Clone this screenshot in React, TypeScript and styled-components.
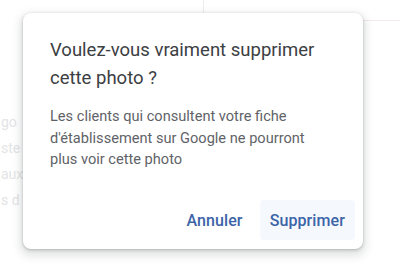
import React from 'react';
import styled, { createGlobalStyle } from 'styled-components';

const GlobalStyle = createGlobalStyle`
  html, body {
    margin: 0;
    padding: 0;
    background: #ffffff;
  }
  body {
    font-family: Roboto, "Liberation Sans", Arial, sans-serif;
    -webkit-font-smoothing: antialiased;
  }
`;

const Page = styled.div`
  position: relative;
  width: 400px;
  height: 276px;
  overflow: hidden;
  background: #ffffff;
`;

const Backdrop = styled.div`
  position: absolute;
  inset: 0;
  display: flex;
  flex-direction: column;
  gap: 9px;
  padding: 114px 0 0 1px;
  color: #e4e4e6;
  font-size: 14px;
  line-height: 17px;
`;

const GhostLine = styled.span`
  white-space: nowrap;
`;

const TopRule = styled.div`
  position: absolute;
  left: 203px;
  top: 0;
  width: 1px;
  height: 13px;
  background: #ececee;
`;

const SideRule = styled.div`
  position: absolute;
  left: 363px;
  right: 0;
  top: 20px;
  height: 1px;
  background: #f7e9ea;
`;

const Dialog = styled.div`
  position: absolute;
  left: 23px;
  top: 13px;
  width: 340px;
  height: 236px;
  box-sizing: border-box;
  display: flex;
  flex-direction: column;
  background: #ffffff;
  border-radius: 8px;
  box-shadow: 0 1px 3px rgba(60, 64, 67, 0.3), 0 4px 8px 3px rgba(60, 64, 67, 0.15);
  padding: 23px 8px 9px 27px;
`;

const Title = styled.h2`
  margin: 0;
  font-size: 18.5px;
  line-height: 28px;
  font-weight: 400;
  color: #3c4043;
  padding-right: 30px;
`;

const Body = styled.p`
  margin: 14px 0 0 0;
  font-size: 14.6px;
  line-height: 21.5px;
  color: #5f6368;
  padding-right: 30px;
`;

const Actions = styled.div`
  margin-top: auto;
  display: flex;
  justify-content: flex-end;
  gap: 7px;
`;

const TextButton = styled.button<{ $focused?: boolean }>`
  height: 40px;
  padding: 0 10px;
  border: none;
  border-radius: 4px;
  background: ${(p) => (p.$focused ? '#f5f8fc' : 'transparent')};
  color: #3c64a8;
  font-family: Roboto, "Liberation Sans", Arial, sans-serif;
  font-size: 16px;
  font-weight: 500;
  letter-spacing: 0.1px;
  cursor: pointer;
`;

export default function App() {
  return (
    <Page>
      <GlobalStyle />
      <Backdrop>
        <GhostLine>go</GhostLine>
        <GhostLine>ste</GhostLine>
        <GhostLine>aux</GhostLine>
        <GhostLine>s d</GhostLine>
      </Backdrop>
      <TopRule />
      <SideRule />
      <Dialog role="dialog">
        <Title>Voulez-vous vraiment supprimer cette photo ?</Title>
        <Body>
          Les clients qui consultent votre fiche d'établissement sur Google ne pourront plus voir cette
          photo
        </Body>
        <Actions>
          <TextButton>Annuler</TextButton>
          <TextButton $focused>Supprimer</TextButton>
        </Actions>
      </Dialog>
    </Page>
  );
}
